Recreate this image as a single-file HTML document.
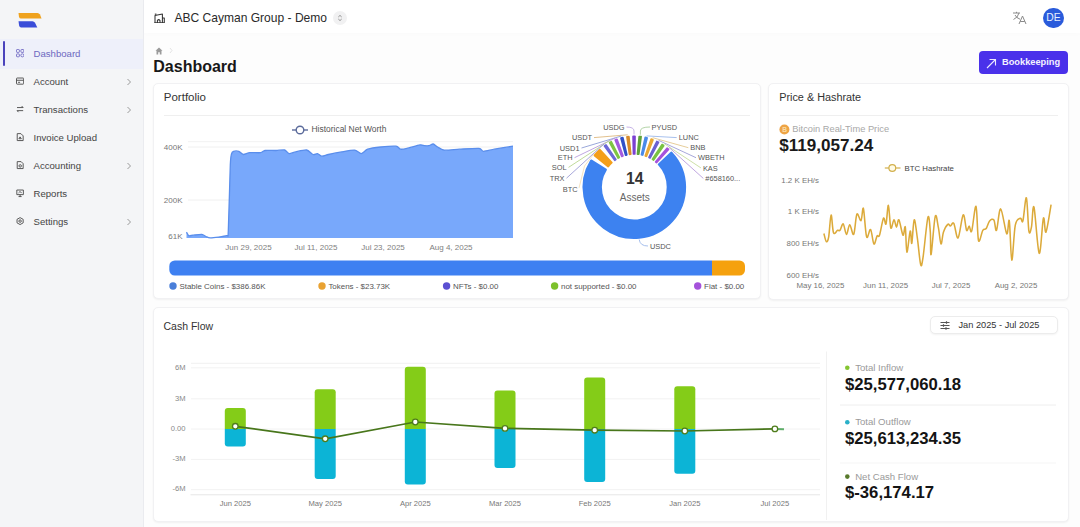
<!DOCTYPE html><html><head><meta charset="utf-8"><style>
*{margin:0;padding:0;box-sizing:border-box}
html,body{width:1080px;height:527px;overflow:hidden;background:#fdfdfd;font-family:"Liberation Sans", sans-serif}
.t{position:absolute;line-height:1;white-space:nowrap}
.abs{position:absolute}
.card{position:absolute;background:#fff;border:1px solid #f1f1f3;border-radius:5px;box-shadow:0 1px 2px rgba(0,0,0,0.05)}
svg text{font-family:"Liberation Sans", sans-serif}
</style></head><body>
<div class="abs" style="left:0;top:0;width:144px;height:527px;background:#f4f5f7;border-right:1px solid #eaebef"></div>
<div class="abs" style="left:0;top:39px;width:143px;height:29.5px;background:#eef0fa"></div>
<div class="abs" style="left:2.8px;top:41px;width:2.3px;height:25px;background:#4a42bc;border-radius:1px"></div>
<svg class="abs" style="left:0;top:0" width="60" height="35" viewBox="0 0 60 35">
<path d="M18.5 13 L37.5 13 Q39 13 40 14.5 L41.5 18.6 L21 18.6 Q19.5 18.6 19 17 Z" fill="#efa21e"/>
<path d="M18.5 21.2 L32.5 21.2 Q34 21.2 35 22.7 L37.3 27.4 L21 27.4 Q19.8 27.4 19.2 26 Z" fill="#3a4dd8"/>
</svg>
<svg class="abs" style="left:15.8px;top:49.4px" width="8.2" height="8.2" viewBox="0 0 8 8" fill="none" stroke="#7a74c8" stroke-width="0.95"><rect x="0.5" y="0.5" width="2.8" height="2.8" rx="0.6"/><rect x="4.8" y="0.5" width="2.8" height="2.8" rx="0.6"/><rect x="0.5" y="4.8" width="2.8" height="2.8" rx="0.6"/><circle cx="6.2" cy="6.2" r="1.5"/></svg>
<div class="t" style="left:33.50px;top:48.70px;font-size:9.6px;color:#6d68c0;font-weight:400;">Dashboard</div>
<svg class="abs" style="left:15.8px;top:77.4px" width="8.2" height="8.2" viewBox="0 0 8 8" fill="none" stroke="#555" stroke-width="0.95"><rect x="0.5" y="1" width="7" height="6" rx="0.6"/><path d="M0.5 3.2 H7.5 M2 5.2 H4"/></svg>
<div class="t" style="left:33.50px;top:76.70px;font-size:9.6px;color:#444;font-weight:400;">Account</div>
<svg class="abs" style="left:126px;top:77.5px" width="6" height="8" viewBox="0 0 6 8"><path d="M1.5 1 L4.5 4 L1.5 7" fill="none" stroke="#9a9a9a" stroke-width="1"/></svg>
<svg class="abs" style="left:15.8px;top:105.4px" width="8.2" height="8.2" viewBox="0 0 8 8" fill="none" stroke="#555" stroke-width="0.95"><path d="M1 2.5 H7 L5.5 1 M7 5.5 H1 L2.5 7"/></svg>
<div class="t" style="left:33.50px;top:104.70px;font-size:9.6px;color:#444;font-weight:400;">Transactions</div>
<svg class="abs" style="left:126px;top:105.5px" width="6" height="8" viewBox="0 0 6 8"><path d="M1.5 1 L4.5 4 L1.5 7" fill="none" stroke="#9a9a9a" stroke-width="1"/></svg>
<svg class="abs" style="left:15.8px;top:133.4px" width="8.2" height="8.2" viewBox="0 0 8 8" fill="none" stroke="#555" stroke-width="0.95"><path d="M1.2 0.6 H4.8 L7 2.8 V7.4 H1.2 Z M2.8 5.6 L4 3.8 L5.2 5.6 Z"/></svg>
<div class="t" style="left:33.50px;top:132.70px;font-size:9.6px;color:#444;font-weight:400;">Invoice Upload</div>
<svg class="abs" style="left:15.8px;top:161.4px" width="8.2" height="8.2" viewBox="0 0 8 8" fill="none" stroke="#555" stroke-width="0.95"><path d="M1.2 0.6 H5 L7 2.6 V7.4 H1.2 Z"/><circle cx="4.1" cy="4.8" r="1.2"/></svg>
<div class="t" style="left:33.50px;top:160.70px;font-size:9.6px;color:#444;font-weight:400;">Accounting</div>
<svg class="abs" style="left:126px;top:161.5px" width="6" height="8" viewBox="0 0 6 8"><path d="M1.5 1 L4.5 4 L1.5 7" fill="none" stroke="#9a9a9a" stroke-width="1"/></svg>
<svg class="abs" style="left:15.8px;top:189.4px" width="8.2" height="8.2" viewBox="0 0 8 8" fill="none" stroke="#555" stroke-width="0.95"><path d="M0.8 1 H7.2 V5.5 H0.8 Z M4 5.5 V7.4 M2.5 7.4 H5.5 M2.5 3.8 L3.8 2.6 L5.5 3.6"/></svg>
<div class="t" style="left:33.50px;top:188.70px;font-size:9.6px;color:#444;font-weight:400;">Reports</div>
<svg class="abs" style="left:15.8px;top:217.4px" width="8.2" height="8.2" viewBox="0 0 8 8" fill="none" stroke="#555" stroke-width="0.95"><path d="M4 0.6 L7 2.3 V5.7 L4 7.4 L1 5.7 V2.3 Z"/><circle cx="4" cy="4" r="1.2"/></svg>
<div class="t" style="left:33.50px;top:216.70px;font-size:9.6px;color:#444;font-weight:400;">Settings</div>
<svg class="abs" style="left:126px;top:217.5px" width="6" height="8" viewBox="0 0 6 8"><path d="M1.5 1 L4.5 4 L1.5 7" fill="none" stroke="#9a9a9a" stroke-width="1"/></svg>
<div class="abs" style="left:144px;top:0;width:936px;height:33px;background:#fff;box-shadow:0 2px 5px rgba(0,0,0,0.012)"></div>
<svg class="abs" style="left:154.2px;top:12.5px" width="11" height="10.5" viewBox="0 0 11 10.5" fill="none" stroke="#333" stroke-width="1.05" stroke-linejoin="round">
<path d="M1 9.7 V2.4 L8.4 1.1 V9.7 M8.4 4.9 H10.3 V9.7 M0.2 9.7 H10.8 M3.4 9.7 V7.6 Q4.7 5.6 6 7.6 V9.7 M0.8 1.3 L2.4 0.9"/></svg>
<div class="t" style="left:174.40px;top:12.28px;font-size:12.05px;color:#2a2a2a;font-weight:400;">ABC Cayman Group - Demo</div>
<div class="abs" style="left:333px;top:11px;width:14px;height:14px;border-radius:50%;background:#f1f1f2"></div>
<svg class="abs" style="left:336px;top:14px" width="8" height="8" viewBox="0 0 8 8"><path d="M2.3 3 L4 1.4 L5.7 3 M2.3 5 L4 6.6 L5.7 5" fill="none" stroke="#888" stroke-width="0.9"/></svg>
<svg class="abs" style="left:1012px;top:11px" width="15" height="14" viewBox="0 0 15 14" fill="none" stroke="#8a8a8a" stroke-width="1">
<path d="M1 2 H8 M4.5 0.8 V2 M7 2 Q6 6.5 1.5 8.5 M3 4 Q4.5 7 8 8.2 M7 13 L10.5 5 L14 13 M8.2 10.5 H12.8"/></svg>
<div class="abs" style="left:1043px;top:7.5px;width:20.5px;height:20.5px;border-radius:50%;background:#2a5bdb"></div>
<div class="t" style="left:1053.40px;transform:translateX(-50%);top:13.45px;font-size:10.3px;color:#e6efff;font-weight:400;">DE</div>
<svg class="abs" style="left:154.5px;top:46.5px" width="8" height="8" viewBox="0 0 8 8"><path d="M4 0.5 L7.5 3.8 H6.5 V7.5 H4.8 V5.3 H3.2 V7.5 H1.5 V3.8 H0.5 Z" fill="#9b9b9b"/></svg>
<svg class="abs" style="left:168px;top:47px" width="6" height="7" viewBox="0 0 6 7"><path d="M2 1 L4 3.5 L2 6" fill="none" stroke="#e4e4e4" stroke-width="1"/></svg>
<div class="t" style="left:153.30px;top:59.10px;font-size:16.0px;color:#181818;font-weight:700;">Dashboard</div>
<div class="abs" style="left:979px;top:51px;width:89px;height:23px;border-radius:4px;background:#4a31ea"></div>
<svg class="abs" style="left:986px;top:57.5px" width="11" height="11" viewBox="0 0 11 11"><path d="M1 10 L9.5 1.5 M3.5 1.5 H9.5 V7.5" fill="none" stroke="#ece8ff" stroke-width="1.1"/></svg>
<div class="t" style="left:1002.00px;top:57.88px;font-size:9.25px;color:#f4f2ff;font-weight:700;">Bookkeeping</div>
<div class="card" style="left:152.5px;top:83px;width:608px;height:216px"></div>
<div class="card" style="left:768px;top:83px;width:300.5px;height:216.5px"></div>
<div class="card" style="left:152.5px;top:306.5px;width:916px;height:215.5px"></div>
<div class="t" style="left:163.80px;top:91.85px;font-size:11.5px;color:#333;font-weight:400;">Portfolio</div>
<div class="abs" style="left:164px;top:114.5px;width:586px;height:1px;background:#efefef"></div>
<div class="t" style="left:779.20px;top:92.28px;font-size:10.85px;color:#333;font-weight:400;">Price &amp; Hashrate</div>
<div class="abs" style="left:780px;top:115px;width:278px;height:1px;background:#efefef"></div>
<div class="t" style="left:163.50px;top:320.95px;font-size:10.5px;color:#333;font-weight:400;">Cash Flow</div>
<svg class="abs" style="left:0;top:0" width="1080" height="527" viewBox="0 0 1080 527">
<line x1="188" y1="147" x2="513" y2="147" stroke="#f0f0f0" stroke-width="1"/>
<line x1="188" y1="200" x2="513" y2="200" stroke="#f0f0f0" stroke-width="1"/>
<line x1="188" y1="141.7" x2="513" y2="141.7" stroke="#f2f2f2" stroke-width="1"/>
<text x="182.50" y="150.12" font-size="8" fill="#777" font-weight="400" text-anchor="end">400K</text>
<text x="182.50" y="203.12" font-size="8" fill="#777" font-weight="400" text-anchor="end">200K</text>
<text x="182.50" y="239.42" font-size="8" fill="#777" font-weight="400" text-anchor="end">61K</text>
<path d="M186.5 238 L186.5 232.2 C186.76 232.61 187.94 235.35 188.7 235.7 C189.46 236.05 191.47 235.35 193 235.2 C194.53 235.05 200.28 234.25 201.8 234.4 C203.32 234.55 204.99 236.09 206 236.5 C207.01 236.91 208.11 237.99 210.5 237.9 C212.89 237.81 224.42 236.50 226.5 235.7 C228.58 234.89 227.86 239.25 228.3 231 C228.74 222.75 229.93 173.98 230.3 165 C230.67 156.02 231.13 155.59 231.5 154 C231.87 152.41 232.64 151.70 233.5 151.4 C234.36 151.10 237.77 151.04 238.9 151.4 C240.03 151.76 241.93 154.35 243.2 154.5 C244.47 154.65 247.76 152.91 249.8 152.7 C251.84 152.49 258.93 152.96 260.7 152.7 C262.47 152.44 263.21 150.76 265 150.5 C266.79 150.24 273.70 150.56 276 150.5 C278.30 150.44 283.18 149.64 284.7 150 C286.22 150.36 287.72 153.38 289 153.6 C290.28 153.82 293.65 152.32 295.7 151.9 C297.75 151.48 304.58 149.70 306.6 150 C308.62 150.30 311.73 154.08 313 154.5 C314.27 154.92 316.47 153.40 317.5 153.6 C318.53 153.80 320.53 156.09 321.8 156.2 C323.07 156.30 326.10 155.00 328.4 154.5 C330.70 154.00 338.44 152.41 341.5 151.9 C344.56 151.39 352.30 149.90 354.6 150.1 C356.90 150.30 359.67 153.70 361.2 153.6 C362.73 153.50 365.41 149.97 367.7 149.2 C369.99 148.43 377.50 147.35 380.8 147 C384.10 146.65 393.70 145.94 396 146.2 C398.30 146.46 399.22 148.94 400.5 149.2 C401.78 149.46 404.73 148.90 407 148.4 C409.27 147.90 417.96 145.22 420 144.9 C422.04 144.59 423.47 145.61 424.5 145.7 C425.53 145.79 427.79 145.90 428.8 145.7 C429.81 145.50 432.17 143.85 433.2 144 C434.23 144.15 436.33 146.29 437.6 147 C438.87 147.71 441.56 149.84 444.1 150.1 C446.64 150.36 455.33 149.40 459.4 149.2 C463.47 149.00 476.20 148.14 479 148.4 C481.80 148.66 481.60 151.31 483.4 151.4 C485.20 151.49 490.95 149.81 494.4 149.2 C497.85 148.59 510.83 146.55 513 146.2 L513 238 Z" fill="#78a8fb"/>
<path d="M186.5 232.2 C186.76 232.61 187.94 235.35 188.7 235.7 C189.46 236.05 191.47 235.35 193 235.2 C194.53 235.05 200.28 234.25 201.8 234.4 C203.32 234.55 204.99 236.09 206 236.5 C207.01 236.91 208.11 237.99 210.5 237.9 C212.89 237.81 224.42 236.50 226.5 235.7 C228.58 234.89 227.86 239.25 228.3 231 C228.74 222.75 229.93 173.98 230.3 165 C230.67 156.02 231.13 155.59 231.5 154 C231.87 152.41 232.64 151.70 233.5 151.4 C234.36 151.10 237.77 151.04 238.9 151.4 C240.03 151.76 241.93 154.35 243.2 154.5 C244.47 154.65 247.76 152.91 249.8 152.7 C251.84 152.49 258.93 152.96 260.7 152.7 C262.47 152.44 263.21 150.76 265 150.5 C266.79 150.24 273.70 150.56 276 150.5 C278.30 150.44 283.18 149.64 284.7 150 C286.22 150.36 287.72 153.38 289 153.6 C290.28 153.82 293.65 152.32 295.7 151.9 C297.75 151.48 304.58 149.70 306.6 150 C308.62 150.30 311.73 154.08 313 154.5 C314.27 154.92 316.47 153.40 317.5 153.6 C318.53 153.80 320.53 156.09 321.8 156.2 C323.07 156.30 326.10 155.00 328.4 154.5 C330.70 154.00 338.44 152.41 341.5 151.9 C344.56 151.39 352.30 149.90 354.6 150.1 C356.90 150.30 359.67 153.70 361.2 153.6 C362.73 153.50 365.41 149.97 367.7 149.2 C369.99 148.43 377.50 147.35 380.8 147 C384.10 146.65 393.70 145.94 396 146.2 C398.30 146.46 399.22 148.94 400.5 149.2 C401.78 149.46 404.73 148.90 407 148.4 C409.27 147.90 417.96 145.22 420 144.9 C422.04 144.59 423.47 145.61 424.5 145.7 C425.53 145.79 427.79 145.90 428.8 145.7 C429.81 145.50 432.17 143.85 433.2 144 C434.23 144.15 436.33 146.29 437.6 147 C438.87 147.71 441.56 149.84 444.1 150.1 C446.64 150.36 455.33 149.40 459.4 149.2 C463.47 149.00 476.20 148.14 479 148.4 C481.80 148.66 481.60 151.31 483.4 151.4 C485.20 151.49 490.95 149.81 494.4 149.2 C497.85 148.59 510.83 146.55 513 146.2" fill="none" stroke="#5a8eec" stroke-width="1.3" stroke-linejoin="round"/>
<text x="248.50" y="249.92" font-size="8" fill="#808080" font-weight="400" text-anchor="middle">Jun 29, 2025</text>
<text x="316.00" y="249.92" font-size="8" fill="#808080" font-weight="400" text-anchor="middle">Jul 11, 2025</text>
<text x="383.00" y="249.92" font-size="8" fill="#808080" font-weight="400" text-anchor="middle">Jul 23, 2025</text>
<text x="451.00" y="249.92" font-size="8" fill="#808080" font-weight="400" text-anchor="middle">Aug 4, 2025</text>
<line x1="292" y1="130" x2="308" y2="130" stroke="#5b6b9b" stroke-width="1.4"/><circle cx="300" cy="130" r="3.8" fill="#fff" stroke="#5b6b9b" stroke-width="1.4"/>
<text x="311.50" y="132.48" font-size="8.45" fill="#555" font-weight="400" text-anchor="start">Historical Net Worth</text>
<defs><clipPath id="cb"><rect x="169.3" y="260.5" width="575.7" height="15.1" rx="5.5"/></clipPath></defs>
<g clip-path="url(#cb)"><rect x="169" y="260" width="543" height="16" fill="#3e80f1"/><rect x="712" y="260" width="34" height="16" fill="#f5a10e"/></g>
<circle cx="173" cy="286" r="3.7" fill="#4a7fd9"/>
<text x="179.40" y="288.90" font-size="7.95" fill="#555" font-weight="400" text-anchor="start">Stable Coins - $386.86K</text>
<circle cx="322" cy="286" r="3.7" fill="#e9a232"/>
<text x="328.40" y="288.90" font-size="7.95" fill="#555" font-weight="400" text-anchor="start">Tokens - $23.73K</text>
<circle cx="446.6" cy="286" r="3.7" fill="#5b50d2"/>
<text x="453.00" y="288.90" font-size="7.95" fill="#555" font-weight="400" text-anchor="start">NFTs - $0.00</text>
<circle cx="554.6" cy="286" r="3.7" fill="#7dc12c"/>
<text x="561.00" y="288.90" font-size="7.95" fill="#555" font-weight="400" text-anchor="start">not supported - $0.00</text>
<circle cx="697.7" cy="286" r="3.7" fill="#a552db"/>
<text x="704.10" y="288.90" font-size="7.95" fill="#555" font-weight="400" text-anchor="start">Fiat - $0.00</text>
<path d="M671.47 152.57 A50.8 50.8 0 1 1 591.12 160.45 L605.91 169.61 A33.4 33.4 0 1 0 658.74 164.43 Z" fill="#3d82f0" stroke="#3d82f0" stroke-width="2" stroke-linejoin="round"/>
<path d="M594.61 155.49 A50.8 50.8 0 0 1 599.90 149.82 L611.68 162.62 A33.4 33.4 0 0 0 608.21 166.35 Z" fill="#f49f1a" stroke="#f49f1a" stroke-width="2" stroke-linejoin="round"/>
<path d="M604.51 145.93 A50.9 50.9 0 0 1 606.00 144.89 L615.78 159.52 A33.3 33.3 0 0 0 614.81 160.20 Z" fill="#6c68d8" stroke="#6c68d8" stroke-width="1.8" stroke-linejoin="round"/>
<path d="M609.69 142.65 A50.9 50.9 0 0 1 611.29 141.80 L619.24 157.50 A33.3 33.3 0 0 0 618.20 158.05 Z" fill="#7ec443" stroke="#7ec443" stroke-width="1.8" stroke-linejoin="round"/>
<path d="M615.22 140.01 A50.9 50.9 0 0 1 616.91 139.36 L622.92 155.90 A33.3 33.3 0 0 0 621.82 156.33 Z" fill="#a35be0" stroke="#a35be0" stroke-width="1.8" stroke-linejoin="round"/>
<path d="M621.02 138.06 A50.9 50.9 0 0 1 622.78 137.62 L626.76 154.76 A33.3 33.3 0 0 0 625.61 155.05 Z" fill="#3050c8" stroke="#3050c8" stroke-width="1.8" stroke-linejoin="round"/>
<path d="M627.02 136.82 A50.9 50.9 0 0 1 628.82 136.60 L630.71 154.09 A33.3 33.3 0 0 0 629.54 154.24 Z" fill="#d98b2a" stroke="#d98b2a" stroke-width="1.8" stroke-linejoin="round"/>
<path d="M633.13 136.31 A50.9 50.9 0 0 1 634.94 136.30 L634.72 153.90 A33.3 33.3 0 0 0 633.53 153.91 Z" fill="#7b40d2" stroke="#7b40d2" stroke-width="1.8" stroke-linejoin="round"/>
<path d="M639.25 136.54 A50.9 50.9 0 0 1 641.05 136.75 L638.72 154.19 A33.3 33.3 0 0 0 637.54 154.06 Z" fill="#5ea23a" stroke="#5ea23a" stroke-width="1.8" stroke-linejoin="round"/>
<path d="M645.30 137.50 A50.9 50.9 0 0 1 647.06 137.93 L642.65 154.96 A33.3 33.3 0 0 0 641.50 154.69 Z" fill="#4a8ae8" stroke="#4a8ae8" stroke-width="1.8" stroke-linejoin="round"/>
<path d="M651.19 139.18 A50.9 50.9 0 0 1 652.89 139.82 L646.46 156.20 A33.3 33.3 0 0 0 645.35 155.79 Z" fill="#eaa834" stroke="#eaa834" stroke-width="1.8" stroke-linejoin="round"/>
<path d="M656.84 141.56 A50.9 50.9 0 0 1 658.45 142.39 L650.10 157.89 A33.3 33.3 0 0 0 649.04 157.34 Z" fill="#6a60d2" stroke="#6a60d2" stroke-width="1.8" stroke-linejoin="round"/>
<path d="M662.16 144.60 A50.9 50.9 0 0 1 663.65 145.62 L653.50 160.00 A33.3 33.3 0 0 0 652.52 159.33 Z" fill="#7ac242" stroke="#7ac242" stroke-width="1.8" stroke-linejoin="round"/>
<path d="M667.07 148.25 A50.9 50.9 0 0 1 668.44 149.44 L656.63 162.50 A33.3 33.3 0 0 0 655.74 161.72 Z" fill="#a552dc" stroke="#a552dc" stroke-width="1.8" stroke-linejoin="round"/>
<text x="634.80" y="183.56" font-size="15.8" fill="#333" font-weight="700" text-anchor="middle">14</text>
<text x="634.80" y="201.34" font-size="10" fill="#666" font-weight="400" text-anchor="middle">Assets</text>
<polyline points="579,188 584.5,166 594.5,153" fill="none" stroke="#f3dcae" stroke-width="0.8"/>
<text x="577.50" y="191.60" font-size="7.4" fill="#555" font-weight="400" text-anchor="end">BTC</text>
<polyline points="594,137.6 627.7,134.8" fill="none" stroke="#d9b070" stroke-width="0.8"/>
<text x="592.00" y="140.30" font-size="7.4" fill="#555" font-weight="400" text-anchor="end">USDT</text>
<polyline points="581.5,148 621.4,136.0" fill="none" stroke="#8090d0" stroke-width="0.8"/>
<text x="579.50" y="150.70" font-size="7.4" fill="#555" font-weight="400" text-anchor="end">USD1</text>
<polyline points="574.5,157.7 615.4,137.9" fill="none" stroke="#b090d8" stroke-width="0.8"/>
<text x="572.50" y="160.40" font-size="7.4" fill="#555" font-weight="400" text-anchor="end">ETH</text>
<polyline points="568.5,167.4 609.6,140.5" fill="none" stroke="#b0d080" stroke-width="0.8"/>
<text x="566.50" y="170.10" font-size="7.4" fill="#555" font-weight="400" text-anchor="end">SOL</text>
<polyline points="566.5,178.2 604.2,143.8" fill="none" stroke="#9090d0" stroke-width="0.8"/>
<text x="564.50" y="180.90" font-size="7.4" fill="#555" font-weight="400" text-anchor="end">TRX</text>
<polyline points="646.6,135.9 676.7,137.6" fill="none" stroke="#90b0e8" stroke-width="0.8"/>
<text x="678.70" y="140.30" font-size="7.4" fill="#555" font-weight="400" text-anchor="start">LUNC</text>
<polyline points="652.7,137.7 688.3,147.7" fill="none" stroke="#e0c080" stroke-width="0.8"/>
<text x="690.30" y="150.40" font-size="7.4" fill="#555" font-weight="400" text-anchor="start">BNB</text>
<polyline points="658.5,140.3 696,157.7" fill="none" stroke="#9090d0" stroke-width="0.8"/>
<text x="698.00" y="160.40" font-size="7.4" fill="#555" font-weight="400" text-anchor="start">WBETH</text>
<polyline points="664.0,143.5 700.9,167.9" fill="none" stroke="#c0d890" stroke-width="0.8"/>
<text x="702.90" y="170.60" font-size="7.4" fill="#555" font-weight="400" text-anchor="start">KAS</text>
<polyline points="669.0,147.4 703.3,178.4" fill="none" stroke="#b090d8" stroke-width="0.8"/>
<text x="705.30" y="181.10" font-size="7.4" fill="#555" font-weight="400" text-anchor="start">#658160...</text>
<path d="M626.5 127 Q634.0 127 634.0 131 L634.0 134.4" fill="none" stroke="#b8a0e0" stroke-width="0.8"/>
<text x="624.50" y="129.60" font-size="7.4" fill="#555" font-weight="400" text-anchor="end">USDG</text>
<path d="M650 127 Q640.4 127 640.4 131 L640.4 134.7" fill="none" stroke="#a0c890" stroke-width="0.8"/>
<text x="651.60" y="129.80" font-size="7.4" fill="#555" font-weight="400" text-anchor="start">PYUSD</text>
<path d="M639.2 239.5 Q640 246 648 246" fill="none" stroke="#90b0e8" stroke-width="0.8"/>
<text x="650.00" y="248.70" font-size="7.4" fill="#555" font-weight="400" text-anchor="start">USDC</text>
<circle cx="784.4" cy="129.5" r="5" fill="#eea445"/>
<text x="784.6" y="131.9" font-size="6.6" fill="#f9dca8" font-weight="700" text-anchor="middle">B</text>
</svg>
<div class="t" style="left:792.30px;top:124.65px;font-size:9.3px;color:#a8a8a8;font-weight:400;">Bitcoin Real-Time Price</div>
<div class="t" style="left:779.20px;top:137.35px;font-size:17.1px;color:#1a1a1a;font-weight:700;">$119,057.24</div>
<svg class="abs" style="left:0;top:0" width="1080" height="527" viewBox="0 0 1080 527">
<text x="819.00" y="182.68" font-size="7.9" fill="#777" font-weight="400" text-anchor="end">1.2 K EH/s</text>
<text x="819.00" y="214.28" font-size="7.9" fill="#777" font-weight="400" text-anchor="end">1 K EH/s</text>
<text x="819.00" y="245.88" font-size="7.9" fill="#777" font-weight="400" text-anchor="end">800 EH/s</text>
<text x="819.00" y="278.18" font-size="7.9" fill="#777" font-weight="400" text-anchor="end">600 EH/s</text>
<text x="820.40" y="287.88" font-size="7.9" fill="#777" font-weight="400" text-anchor="middle">May 16, 2025</text>
<text x="885.60" y="287.88" font-size="7.9" fill="#777" font-weight="400" text-anchor="middle">Jun 11, 2025</text>
<text x="951.00" y="287.88" font-size="7.9" fill="#777" font-weight="400" text-anchor="middle">Jul 7, 2025</text>
<text x="1016.00" y="287.88" font-size="7.9" fill="#777" font-weight="400" text-anchor="middle">Aug 2, 2025</text>
<path d="M823.9 233.5 C824.30 234.85 825.50 241.05 826.3 241.6 C827.10 242.15 827.90 241.23 828.7 236.8 C829.50 232.37 830.30 215.68 831.1 215 C831.90 214.32 832.42 230.15 833.5 232.7 C834.58 235.25 836.52 230.70 837.6 230.3 C838.68 229.90 839.07 231.37 840 230.3 C840.93 229.23 842.12 223.22 843.2 223.9 C844.28 224.58 845.42 234.27 846.5 234.4 C847.58 234.53 848.50 224.70 849.7 224.7 C850.90 224.70 852.50 236.15 853.7 234.4 C854.90 232.65 855.68 216.50 856.9 214.2 C858.12 211.90 859.92 221.55 861 220.6 C862.08 219.65 862.47 205.80 863.4 208.5 C864.33 211.20 865.40 233.30 866.6 236.8 C867.80 240.30 869.38 228.30 870.6 229.5 C871.82 230.70 872.82 242.92 873.9 244 C874.98 245.08 876.17 237.47 877.1 236 C878.03 234.53 878.43 238.17 879.5 235.2 C880.57 232.23 882.42 220.08 883.5 218.2 C884.58 216.32 885.18 226.05 886 223.9 C886.82 221.75 887.60 204.63 888.4 205.3 C889.20 205.97 889.87 225.48 890.8 227.9 C891.73 230.32 893.05 219.93 894 219.8 C894.95 219.67 895.68 227.10 896.5 227.1 C897.32 227.10 897.82 218.45 898.9 219.8 C899.98 221.15 901.93 233.98 903 235.2 C904.07 236.42 904.65 224.28 905.3 227.1 C905.95 229.92 906.08 251.43 906.9 252.1 C907.72 252.77 909.38 232.58 910.2 231.1 C911.02 229.62 911.13 245.08 911.8 243.2 C912.47 241.32 913.27 220.60 914.2 219.8 C915.13 219.00 916.33 231.00 917.4 238.4 C918.47 245.80 919.67 260.98 920.6 264.2 C921.53 267.42 921.78 265.50 923 257.7 C924.22 249.90 926.68 221.70 927.9 217.4 C929.12 213.10 929.77 225.72 930.3 231.9 C930.83 238.08 930.28 257.05 931.1 254.5 C931.92 251.95 933.98 221.07 935.2 216.6 C936.42 212.13 937.43 223.15 938.4 227.7 C939.37 232.25 940.15 243.18 941 243.9 C941.85 244.62 942.37 235.27 943.5 232 C944.63 228.73 946.65 225.30 947.8 224.3 C948.95 223.30 949.40 226.15 950.4 226 C951.40 225.85 952.52 221.42 953.8 223.4 C955.08 225.38 956.53 239.32 958.1 237.9 C959.67 236.48 961.78 216.17 963.2 214.9 C964.62 213.63 965.60 228.45 966.6 230.3 C967.60 232.15 968.35 225.87 969.2 226 C970.05 226.13 970.57 234.38 971.7 231.1 C972.83 227.82 974.87 204.73 976 206.3 C977.13 207.87 977.37 236.50 978.5 240.5 C979.63 244.50 981.52 232.30 982.8 230.3 C984.08 228.30 985.07 230.07 986.2 228.5 C987.33 226.93 988.32 222.32 989.6 220.9 C990.88 219.48 992.75 218.43 993.9 220 C995.05 221.57 995.37 232.15 996.5 230.3 C997.63 228.45 999.00 208.33 1000.7 208.9 C1002.40 209.47 1005.27 231.70 1006.7 233.7 C1008.13 235.70 1008.45 216.50 1009.3 220.9 C1010.15 225.30 1010.80 259.40 1011.8 260.1 C1012.80 260.80 1013.87 232.07 1015.3 225.1 C1016.73 218.13 1019.13 219.00 1020.4 218.3 C1021.67 217.60 1021.90 224.32 1022.9 220.9 C1023.90 217.48 1025.40 196.10 1026.4 197.8 C1027.40 199.50 1028.05 226.27 1028.9 231.1 C1029.75 235.93 1030.65 230.78 1031.5 226.8 C1032.35 222.82 1032.72 202.78 1034 207.2 C1035.28 211.62 1037.63 251.45 1039.2 253.3 C1040.77 255.15 1042.27 221.85 1043.4 218.3 C1044.53 214.75 1044.72 234.28 1046 232 C1047.28 229.72 1050.25 209.17 1051.1 204.6" fill="none" stroke="#dcaa3a" stroke-width="1.55" stroke-linejoin="round"/>
<line x1="884.8" y1="168" x2="900.5" y2="168" stroke="#d2b04c" stroke-width="1.2"/><circle cx="892.3" cy="168" r="3.4" fill="#fffbe6" stroke="#d2b04c" stroke-width="1.2"/>
<text x="904.50" y="170.84" font-size="7.8" fill="#444" font-weight="400" text-anchor="start">BTC Hashrate</text>
<line x1="191" y1="367.8" x2="820" y2="367.8" stroke="#f2f2f2" stroke-width="1"/>
<text x="185.50" y="369.57" font-size="7.6" fill="#888" font-weight="400" text-anchor="end">6M</text>
<line x1="191" y1="398.8" x2="820" y2="398.8" stroke="#f2f2f2" stroke-width="1"/>
<text x="185.50" y="400.57" font-size="7.6" fill="#888" font-weight="400" text-anchor="end">3M</text>
<line x1="191" y1="429" x2="820" y2="429" stroke="#f2f2f2" stroke-width="1"/>
<text x="185.50" y="430.77" font-size="7.6" fill="#888" font-weight="400" text-anchor="end">0.00</text>
<line x1="191" y1="459.4" x2="820" y2="459.4" stroke="#f2f2f2" stroke-width="1"/>
<text x="185.50" y="461.17" font-size="7.6" fill="#888" font-weight="400" text-anchor="end">-3M</text>
<line x1="191" y1="489.7" x2="820" y2="489.7" stroke="#f2f2f2" stroke-width="1"/>
<text x="185.50" y="491.47" font-size="7.6" fill="#888" font-weight="400" text-anchor="end">-6M</text>
<line x1="190.5" y1="494.8" x2="820" y2="494.8" stroke="#e6e6e6" stroke-width="1"/>
<line x1="191" y1="363.3" x2="820" y2="363.3" stroke="#f0f0f0" stroke-width="1"/>
<path d="M224.8 429 V411 Q224.8 408 227.8 408 H242.8 Q245.8 408 245.8 411 V429 Z" fill="#84cc18"/>
<path d="M224.8 429 V443.5 Q224.8 446.5 227.8 446.5 H242.8 Q245.8 446.5 245.8 443.5 V429 Z" fill="#0cb4d6"/>
<text x="235.30" y="505.67" font-size="7.6" fill="#777" font-weight="400" text-anchor="middle">Jun 2025</text>
<path d="M314.7 429 V392.2 Q314.7 389.2 317.7 389.2 H332.7 Q335.7 389.2 335.7 392.2 V429 Z" fill="#84cc18"/>
<path d="M314.7 429 V475.9 Q314.7 478.9 317.7 478.9 H332.7 Q335.7 478.9 335.7 475.9 V429 Z" fill="#0cb4d6"/>
<text x="325.20" y="505.67" font-size="7.6" fill="#777" font-weight="400" text-anchor="middle">May 2025</text>
<path d="M404.8 429 V369.8 Q404.8 366.8 407.8 366.8 H422.8 Q425.8 366.8 425.8 369.8 V429 Z" fill="#84cc18"/>
<path d="M404.8 429 V481.5 Q404.8 484.5 407.8 484.5 H422.8 Q425.8 484.5 425.8 481.5 V429 Z" fill="#0cb4d6"/>
<text x="415.30" y="505.67" font-size="7.6" fill="#777" font-weight="400" text-anchor="middle">Apr 2025</text>
<path d="M494.5 429 V393.5 Q494.5 390.5 497.5 390.5 H512.5 Q515.5 390.5 515.5 393.5 V429 Z" fill="#84cc18"/>
<path d="M494.5 429 V465.1 Q494.5 468.1 497.5 468.1 H512.5 Q515.5 468.1 515.5 465.1 V429 Z" fill="#0cb4d6"/>
<text x="505.00" y="505.67" font-size="7.6" fill="#777" font-weight="400" text-anchor="middle">Mar 2025</text>
<path d="M584.2 429 V380.6 Q584.2 377.6 587.2 377.6 H602.2 Q605.2 377.6 605.2 380.6 V429 Z" fill="#84cc18"/>
<path d="M584.2 429 V478.9 Q584.2 481.9 587.2 481.9 H602.2 Q605.2 481.9 605.2 478.9 V429 Z" fill="#0cb4d6"/>
<text x="594.70" y="505.67" font-size="7.6" fill="#777" font-weight="400" text-anchor="middle">Feb 2025</text>
<path d="M674.3 429 V389.2 Q674.3 386.2 677.3 386.2 H692.3 Q695.3 386.2 695.3 389.2 V429 Z" fill="#84cc18"/>
<path d="M674.3 429 V470.7 Q674.3 473.7 677.3 473.7 H692.3 Q695.3 473.7 695.3 470.7 V429 Z" fill="#0cb4d6"/>
<text x="684.80" y="505.67" font-size="7.6" fill="#777" font-weight="400" text-anchor="middle">Jan 2025</text>
<text x="774.90" y="505.67" font-size="7.6" fill="#777" font-weight="400" text-anchor="middle">Jul 2025</text>
<polyline points="235.3,426.3 325.2,438.8 415.3,422 505,428.4 594.7,430.2 684.8,431 774.9,428.9" fill="none" stroke="#48761b" stroke-width="1.7"/>
<line x1="775" y1="428.9" x2="784" y2="429.2" stroke="#5fae6a" stroke-width="2"/>
<circle cx="235.3" cy="426.3" r="2.8" fill="#fff" stroke="#4f7d1c" stroke-width="1.3"/>
<circle cx="325.2" cy="438.8" r="2.8" fill="#fff" stroke="#4f7d1c" stroke-width="1.3"/>
<circle cx="415.3" cy="422" r="2.8" fill="#fff" stroke="#4f7d1c" stroke-width="1.3"/>
<circle cx="505" cy="428.4" r="2.8" fill="#fff" stroke="#4f7d1c" stroke-width="1.3"/>
<circle cx="594.7" cy="430.2" r="2.8" fill="#fff" stroke="#4f7d1c" stroke-width="1.3"/>
<circle cx="684.8" cy="431" r="2.8" fill="#fff" stroke="#4f7d1c" stroke-width="1.3"/>
<circle cx="774.9" cy="428.9" r="2.8" fill="#fff" stroke="#4f7d1c" stroke-width="1.3"/>
<line x1="826.5" y1="351.5" x2="826.5" y2="520" stroke="#f1f1f1" stroke-width="1"/>
<line x1="840" y1="405" x2="1056" y2="405" stroke="#eeeeee" stroke-width="1"/>
<line x1="840" y1="463" x2="1056" y2="463" stroke="#f5f5f5" stroke-width="1"/>
<circle cx="847.3" cy="367.7" r="2.3" fill="#84c531"/>
<circle cx="847.3" cy="422.2" r="2.3" fill="#2ab0c8"/>
<circle cx="847.3" cy="476.6" r="2.3" fill="#587a2c"/>
</svg>
<div class="abs" style="left:930.3px;top:315.8px;width:127.4px;height:18px;border:1px solid #ececec;border-radius:5px;background:#fff;box-shadow:0 1px 2px rgba(0,0,0,0.05)"></div>
<svg class="abs" style="left:939.5px;top:320.5px" width="10" height="9" viewBox="0 0 10 9" fill="none" stroke="#555" stroke-width="1">
<path d="M0.5 1.5 H9.5 M0.5 4.5 H9.5 M0.5 7.5 H9.5"/><path d="M6.5 0.3 V2.7 M3.5 3.3 V5.7 M6 6.3 V8.7" stroke-width="1.2"/></svg>
<div class="t" style="left:958.50px;top:320.69px;font-size:9.22px;color:#333;font-weight:400;">Jan 2025 - Jul 2025</div>
<div class="t" style="left:855.20px;top:362.90px;font-size:9.6px;color:#9a9a9a;font-weight:400;">Total Inflow</div>
<div class="t" style="left:845.00px;top:376.85px;font-size:16.7px;color:#141414;font-weight:700;">$25,577,060.18</div>
<div class="t" style="left:855.20px;top:417.40px;font-size:9.6px;color:#9a9a9a;font-weight:400;">Total Outflow</div>
<div class="t" style="left:845.00px;top:431.15px;font-size:16.7px;color:#141414;font-weight:700;">$25,613,234.35</div>
<div class="t" style="left:855.20px;top:471.80px;font-size:9.6px;color:#9a9a9a;font-weight:400;">Net Cash Flow</div>
<div class="t" style="left:845.00px;top:485.25px;font-size:16.7px;color:#141414;font-weight:700;">$-36,174.17</div>
</body></html>
